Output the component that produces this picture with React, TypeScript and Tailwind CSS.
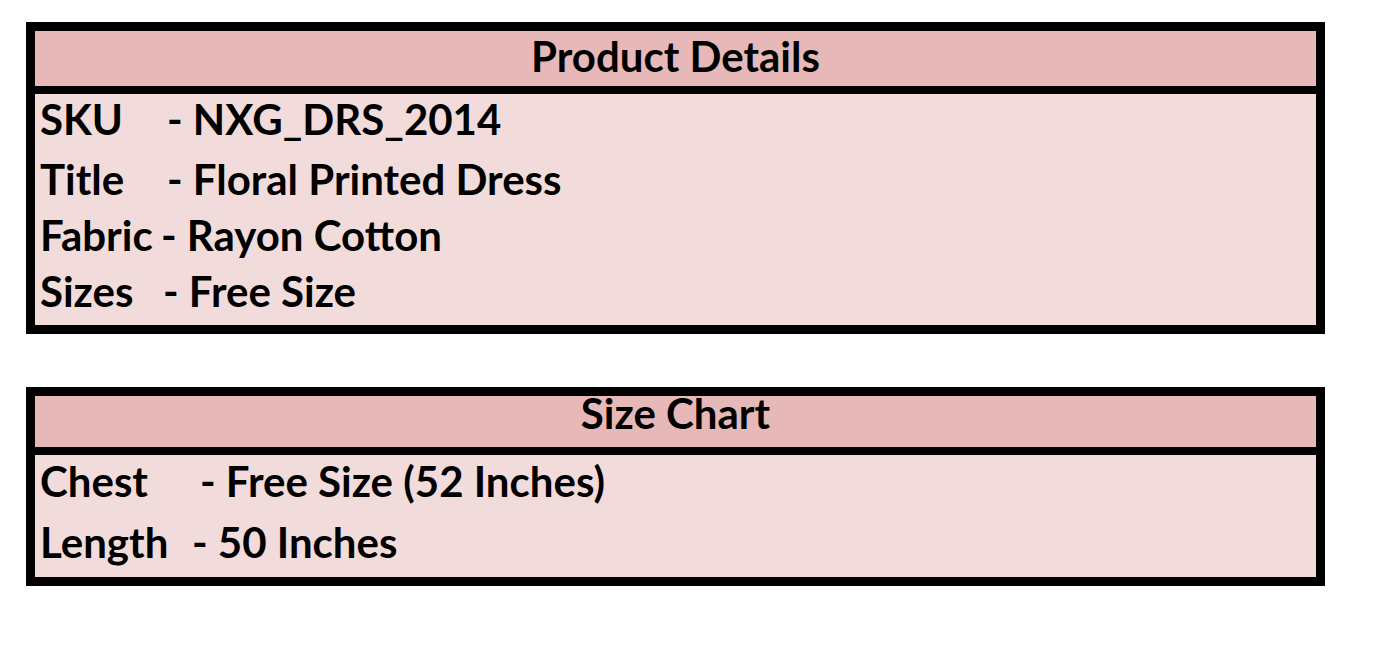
const productRows = [
  { label: 'SKU', value: '- NXG_DRS_2014', labelW: 'w-[127px]', rowH: 'h-[60px]' },
  { label: 'Title', value: '- Floral Printed Dress', labelW: 'w-[127px]', rowH: 'h-[56px]' },
  { label: 'Fabric', value: '- Rayon Cotton', labelW: 'w-[121px]', rowH: 'h-[56px]' },
  { label: 'Sizes', value: '- Free Size', labelW: 'w-[123px]', rowH: 'h-[53px]' },
];

const sizeRows = [
  { label: 'Chest', value: '- Free Size (52 Inches)', labelW: 'w-[160px]', rowH: 'h-[61px]' },
  { label: 'Length', value: '- 50 Inches', labelW: 'w-[152px]', rowH: 'h-[54px]' },
];

type Row = { label: string; value: string; labelW: string; rowH: string };

function DetailRow({ row }: { row: Row }) {
  return (
    <div className={`${row.rowH} flex items-start leading-[38px] whitespace-nowrap`}>
      <span className={`${row.labelW} shrink-0`}>{row.label}</span>
      <span>{row.value}</span>
    </div>
  );
}

export default function App() {
  return (
    <div
      className="min-h-screen bg-white pt-[22px] pl-[26px] text-black font-bold text-[42px]"
      style={{ fontFamily: 'Lato, "Open Sans", sans-serif' }}
    >
      {/* Product details table */}
      <div className="w-[1299px] border-[9px] border-black">
        <div className="h-[63px] border-b-[8px] border-black bg-[#e6b8b7] text-center leading-[51px]">
          Product Details
        </div>
        <div className="bg-[#f2dcdb] pt-[6px] pl-[5px]">
          {productRows.map((row) => (
            <DetailRow key={row.label} row={row} />
          ))}
        </div>
      </div>

      {/* Size chart table */}
      <div className="mt-[53px] w-[1299px] border-[9px] border-black">
        <div className="h-[59px] border-b-[8px] border-black bg-[#e6b8b7] text-center leading-[35px]">
          Size Chart
        </div>
        <div className="bg-[#f2dcdb] pt-[7px] pl-[5px]">
          {sizeRows.map((row) => (
            <DetailRow key={row.label} row={row} />
          ))}
        </div>
      </div>
    </div>
  );
}
